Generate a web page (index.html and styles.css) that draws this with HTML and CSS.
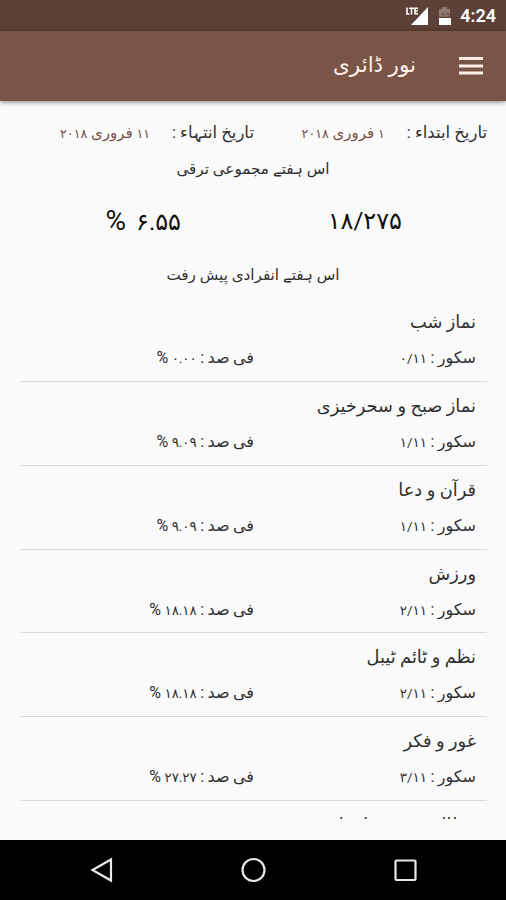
FILE: index.html
```html
<!DOCTYPE html>
<html lang="ur" dir="rtl">
  <head>
    <meta charset="UTF-8" />
    <meta name="viewport" content="width=device-width, initial-scale=1.0" />
    <title>نور ڈائری</title>
    <link rel="stylesheet" href="styles.css">
  </head>
  <body>

    <!-- Status bar -->
    <div class="status-bar" dir="ltr">
      <svg class="signal" width="26" height="20" viewBox="0 0 26 20">
        <path d="M25 1v18H8z" fill="#fff"/>
        <path d="M4 1.500v6.500h2.500M6 2.200h5M8.500 2v6.500M15 2.200h-3v5.500h3M12 5h2.800" fill="none" stroke="#fff" stroke-width="1.6"/>
      </svg>
      <svg class="battery" width="14" height="20" viewBox="0 0 14 20">
        <path d="M4 1h5v2h3v8H1V3h3z" fill="#907970"/>
        <path d="M1 12h12v7H1z" fill="#fff"/>
        <path d="M3 8h3v3H3m5-3h3v3H8" fill="none" stroke="#62483f" stroke-width="1"/>
      </svg>
      <span class="clock">4:24</span>
    </div>

    <!-- Toolbar -->
    <header class="toolbar">
      <svg class="menu" width="24" height="20" viewBox="0 0 24 20">
        <path d="M0 2.500h24M0 10h24M0 17h24" stroke="#fdeee8" stroke-width="3"/>
      </svg>
      <h1>نور ڈائری</h1>
    </header>

    <main>
      <div class="dates">
        <div class="date"><span>تاریخ ابتداء :</span><span class="value"><b>۱</b> فروری <b>۲۰۱۸</b></span></div>
        <div class="date"><span>تاریخ انتہاء :</span><span class="value"><b>۱۱</b> فروری <b>۲۰۱۸</b></span></div>
      </div>
      <h2 class="weekly">اس ہفتے مجموعی ترقی</h2>
      <div class="totals">
        <span>۱۸/۲۷۵</span>
        <span>۶.۵۵ <i>%</i></span>
      </div>
      <h2 class="single">اس ہفتے انفرادی پیش رفت</h2>

      <ul class="list">
        <li>
          <h3>نماز شب</h3>
          <p><span>سکور : <b>۰/۱۱</b></span><span>فی صد : <b>۰.۰۰</b> %</span></p>
        </li>
        <li>
          <h3>نماز صبح و سحرخیزی</h3>
          <p><span>سکور : <b>۱/۱۱</b></span><span>فی صد : <b>۹.۰۹</b> %</span></p>
        </li>
        <li>
          <h3>قرآن و دعا</h3>
          <p><span>سکور : <b>۱/۱۱</b></span><span>فی صد : <b>۹.۰۹</b> %</span></p>
        </li>
        <li>
          <h3>ورزش</h3>
          <p><span>سکور : <b>۲/۱۱</b></span><span>فی صد : <b>۱۸.۱۸</b> %</span></p>
        </li>
        <li>
          <h3>نظم و ٹائم ٹیبل</h3>
          <p><span>سکور : <b>۲/۱۱</b></span><span>فی صد : <b>۱۸.۱۸</b> %</span></p>
        </li>
        <li>
          <h3>غور و فکر</h3>
          <p><span>سکور : <b>۳/۱۱</b></span><span>فی صد : <b>۲۷.۲۷</b> %</span></p>
        </li>
        <li>
          <h3>مطالعہ سے معلومات</h3>
        </li>
      </ul>
    </main>

    <!-- Navigation buttons -->
    <nav class="nav-bar" dir="ltr">
      <svg width="26" height="26" viewBox="0 0 26 26"><path d="M23 2.500v21L4.500 13z"/></svg>
      <svg width="26" height="26" viewBox="0 0 26 26"><circle cx="13.500" cy="13" r="11"/></svg>
      <svg width="26" height="26" viewBox="0 0 26 26"><rect x="3.500" y="3.500" width="20" height="19.500" rx="1"/></svg>
    </nav>

  </body>
</html>
```
FILE: styles.css
```css
:root {
  --bar: #795548;
  --bar-dark: #5d4037;
  --bg: #fafafa;
  --text: #303030;
}

* {
  box-sizing: border-box;
}

body {
  margin: 0;
  height: 900px;
  display: flex;
  flex-direction: column;
  overflow: hidden;
  background: var(--bg);
  color: var(--text);
  font-family: Roboto, "DejaVu Sans", sans-serif;
}

h1, h2, h3, p, ul {
  margin: 0;
  padding: 0;
  font-weight: 400;
}

/* digits run a bit smaller than the words */
b {
  font-weight: 400;
  font-size: 13.4px;
}

.status-bar {
  flex: none;
  height: 31px;
  display: flex;
  align-items: center;
  justify-content: flex-end;
  padding-right: 10px;
  background: var(--bar-dark);
  color: #fff;
}

.signal {
  margin-right: 9px;
}

.battery {
  margin-right: 8px;
}

.clock {
  font-size: 18px;
  font-weight: 600;
}

.toolbar {
  flex: none;
  height: 70px;
  display: flex;
  align-items: center;
  gap: 43px;
  padding-right: 23px;
  background: var(--bar);
  color: #fdeee8;
  box-shadow: 0 1px 5px rgba(0, 0, 0, 0.5);
}

.toolbar h1 {
  padding-bottom: 3px;
  font-size: 21.5px;
}

main {
  height: 718px;
  overflow: hidden;
  padding: 20px 19px 0;
}

.dates {
  display: flex;
  height: 24px;
  line-height: 24px;
  font-size: 16.5px;
  white-space: nowrap;
}

.date {
  width: 233px;
  display: flex;
  gap: 22px;
}

.date .value {
  color: #765046;
  font-size: 15px;
}

.date b {
  font-size: 12.7px;
}

h2 {
  height: 24px;
  line-height: 24px;
  font-size: 15.2px;
  text-align: center;
}

.weekly {
  margin-top: 12px;
}

.totals {
  display: flex;
  height: 40px;
  margin-top: 20px;
  line-height: 40px;
  font-size: 24px;
  color: #111;
}

.totals span {
  width: 50%;
  padding-right: 85px;
  white-space: nowrap;
}

.totals span:last-child {
  padding-right: 72px;
  word-spacing: 4px;
}

.totals i {
  font-style: normal;
  font-size: 28px;
}

.single {
  margin-top: 22px;
}

.list {
  list-style: none;
  margin: 11px 0 0 2px;
}

.list li {
  height: 83.85px;
  padding: 11px 11px 0 0;
  border-bottom: 1px solid #d8d8d8;
}

.list h3 {
  height: 26px;
  line-height: 26px;
  font-size: 17.8px;
}

.list p {
  display: flex;
  height: 24px;
  margin-top: 11px;
  line-height: 24px;
  font-size: 16px;
  word-spacing: -0.5px;
}

.list p span {
  width: 222px;
  white-space: nowrap;
}

.nav-bar {
  flex: none;
  margin-top: auto;
  height: 60px;
  display: flex;
  align-items: center;
  justify-content: space-between;
  padding: 0 88px;
  background: #000;
}

.nav-bar svg {
  fill: none;
  stroke: #e8e8e8;
  stroke-width: 2.2;
}
```
